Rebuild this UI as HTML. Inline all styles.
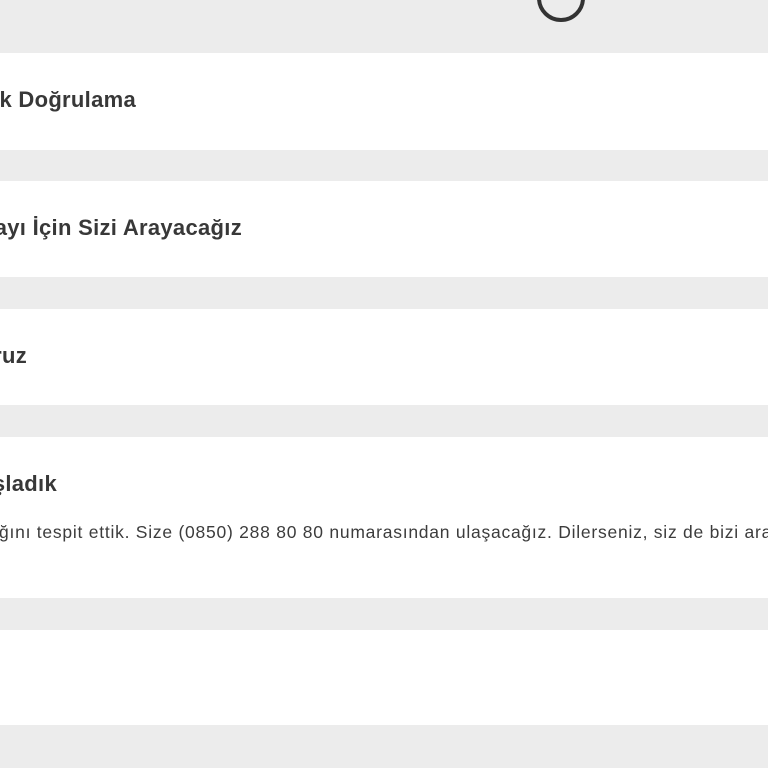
<!DOCTYPE html>
<html><head><meta charset="utf-8"><style>
html,body{margin:0;padding:0;}
body{width:768px;height:768px;background:#ececec;position:relative;overflow:hidden;font-family:"Liberation Sans",sans-serif;color:#383838;}
.c{position:absolute;left:0;width:768px;background:#fff;overflow:hidden;}
.t{position:absolute;white-space:nowrap;font-weight:bold;font-size:22px;letter-spacing:0.3px;}
.b{position:absolute;left:-1px;white-space:nowrap;font-size:17.5px;color:#3c3c3c;letter-spacing:0.75px;}
.ring{position:absolute;left:537px;top:-26px;width:40px;height:40px;border:4px solid #333;border-radius:50%;}
</style></head><body>
<div class="ring"></div>
<div class="c" style="top:53px;height:97px"><span class="t" style="top:34px;right:632px">Kimlik Doğrulama</span></div>
<div class="c" style="top:181px;height:96px"><span class="t" style="top:34px;right:526px">Onayı İçin Sizi Arayacağız</span></div>
<div class="c" style="top:309px;height:96px"><span class="t" style="top:34px;right:741px">Arıyoruz</span></div>
<div class="c" style="top:437px;height:161px"><span class="t" style="top:34px;right:711px">Başladık</span>
<span class="b" style="top:85px">ğını tespit ettik. Size (0850) 288 80 80 numarasından ulaşacağız. Dilerseniz, siz de bizi ara</span></div>
<div class="c" style="top:630px;height:95px"></div>
</body></html>
